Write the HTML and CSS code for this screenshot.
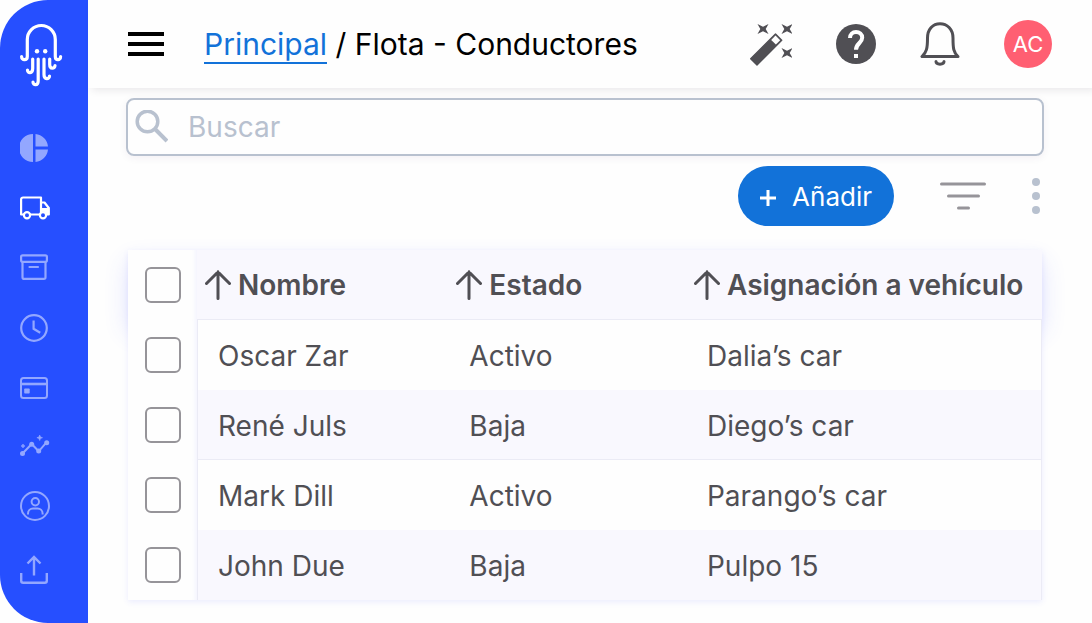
FILE: index.html
```html
<!DOCTYPE html>
<html lang="es">
<head>
    <meta charset="UTF-8">
    <meta name="viewport" content="width=device-width, initial-scale=1.0">
    <title>Flota - Conductores</title>
    <link rel="stylesheet" href="styles.css">
</head>
<body>
    <div class="app">
        <nav class="sidebar" aria-label="Principal">
            <a class="logo" href="#" aria-label="Inicio">
                <svg width="44" height="64" viewBox="0 0 44 64" fill="none" stroke="#fff" stroke-width="3.2" stroke-linecap="round" stroke-linejoin="round">
                    <path d="M1.600 33.500C1.600 38 7.300 37.500 7.300 33.500V16.500a14 14 0 0 1 28 0V33.500C35.300 37.500 40.600 38 40.600 33.500"/>
                    <path d="M12.700 36V45.500C12.700 51 7.500 50.500 7.500 47"/>
                    <path d="M18.200 36V58C18.200 63 13 62.500 13 59"/>
                    <path d="M24 36V51.500C24 57 29.500 56.500 29.500 53"/>
                    <path d="M29.700 36V41.500C29.700 46.500 35 46 35 42.500"/>
                    <circle cx="17" cy="28.200" r="2.200" fill="#fff" stroke="none"/>
                    <circle cx="25.200" cy="28.200" r="2.200" fill="#fff" stroke="none"/>
                </svg>
            </a>
            <div class="menu">
                <a class="menu-item" href="#" aria-label="Panel">
                    <svg width="28" height="28" viewBox="0 0 28 28" fill="currentColor">
                        <path d="M13 0v28A14 14 0 0 1 13 0zM15.500 0A14 14 0 0 1 28 12.600H15.500zM15.500 15.400H28A14 14 0 0 1 15.500 28z"/>
                    </svg>
                </a>
                <a class="menu-item active" href="#" aria-label="Flota">
                    <svg width="30" height="24" viewBox="0 0 30 24" fill="none" stroke="currentColor" stroke-width="2.200" stroke-linejoin="round">
                        <path d="M4 18.500H1.100V3.500a2 2 0 0 1 2-2H21V18.500H10"/>
                        <path d="M21 6.500h3.500l4.300 5.500v6.500h-2"/>
                        <path d="M21 12h7.800v6h-2.500a3.500 3.500 0 0 0-5.300-2z" fill="currentColor" stroke="none"/>
                        <circle cx="7" cy="19.300" r="3.100" fill="#264fff"/>
                        <circle cx="23" cy="19.300" r="3.100" fill="#264fff"/>
                    </svg>
                </a>
                <a class="menu-item" href="#" aria-label="Archivo">
                    <svg width="28" height="28" viewBox="0 0 28 28" fill="none" stroke="currentColor" stroke-width="2.200" stroke-linejoin="round" stroke-linecap="round">
                        <rect x="1.100" y="1.300" width="25.800" height="6.500" rx="1.500"/>
                        <path d="M2.500 8v15.200a1.700 1.700 0 0 0 1.700 1.700h19.600a1.700 1.700 0 0 0 1.700-1.700V8M9.500 13h8.500"/>
                    </svg>
                </a>
                <a class="menu-item" href="#" aria-label="Historial">
                    <svg width="28" height="28" viewBox="0 0 28 28" fill="none" stroke="currentColor" stroke-width="2.200">
                        <circle cx="14" cy="14" r="12.800"/>
                        <path d="M13.600 6.500v8.300l6.600 4"/>
                    </svg>
                </a>
                <a class="menu-item" href="#" aria-label="Pagos">
                    <svg width="28" height="22" viewBox="0 0 28 22" fill="none" stroke="currentColor" stroke-width="2">
                        <rect x="1" y="1" width="26" height="20" rx="2.500"/>
                        <path d="M1 7h26" stroke-width="2.600"/>
                        <rect x="4.200" y="11.500" width="5.500" height="5" rx=".8" fill="currentColor" stroke="none"/>
                    </svg>
                </a>
                <a class="menu-item" href="#" aria-label="Estadísticas">
                    <svg width="30" height="28" viewBox="0 0 30 28" fill="currentColor">
                        <path d="M2.500 19.500l9.200-9.500 7 7.300 8-9.200" fill="none" stroke="currentColor" stroke-width="2"/>
                        <circle cx="2.500" cy="19.500" r="2.500"/>
                        <circle cx="11.700" cy="10.300" r="2.500"/>
                        <circle cx="18.700" cy="17" r="2.500"/>
                        <circle cx="26.700" cy="8.700" r="2.500"/>
                        <path d="M19.700 1l.8 2 2 .7-2 .8-.8 2-.8-2-2-.8 2-.7zM3 10l.6 1.400 1.400.6-1.400.6L3 14l-.6-1.400L1 12l1.400-.6z" stroke="currentColor" stroke-width=".6"/>
                    </svg>
                </a>
                <a class="menu-item" href="#" aria-label="Perfil">
                    <svg width="30" height="34" viewBox="0 0 30 34" fill="none" stroke="currentColor" stroke-width="2">
                        <circle cx="15" cy="15" r="14"/>
                        <circle cx="15.300" cy="10.800" r="3.700"/>
                        <path d="M8 23.500v-1a5 5 0 0 1 5-5h4.600a5 5 0 0 1 5 5v1"/>
                    </svg>
                </a>
                <a class="menu-item" href="#" aria-label="Exportar">
                    <svg width="28" height="34" viewBox="0 0 28 34" fill="none" stroke="currentColor" stroke-width="2.400">
                        <path d="M1.200 22v7.800a2 2 0 0 0 2 2h21.600a2 2 0 0 0 2-2V22M14 24.500V6M7.500 12.500L14 6l6.500 6.500"/>
                    </svg>
                </a>
            </div>
        </nav>

        <div class="main">
            <header class="header">
                <button class="icon-btn" type="button" aria-label="Menú">
                    <svg width="36" height="24" viewBox="0 0 36 24"><path d="M0 0h36v4H0zM0 10h36v4H0zM0 20h36v4H0z"/></svg>
                </button>
                <h1 class="title"><a href="#">Principal</a> / Flota - Conductores</h1>
                <div class="actions">
                    <button class="icon-btn" type="button" aria-label="Asistente">
                        <svg width="42" height="44" viewBox="0 0 42 44" fill="#504f54">
                            <path d="M25.500 12l6.200 6.200L7 43 .7 36.700z" stroke="#504f54" stroke-width="1.400" stroke-linejoin="round"/>
                            <path d="M25.500 13.600l4.700 4.700-4.300 4.300-4.700-4.700z" fill="#fefefe"/>
                            <path d="M7.500 2l5.500 2.700L18.500 2 15.700 7l2.800 5-5.500-2.700L7.500 12l2.800-5zM31.500 2L37 4.700 42.500 2 39.700 7l2.800 5L37 9.300 31.500 12l2.800-5zM31.500 26l5.500 2.700 5.500-2.700-2.800 5 2.800 5-5.500-2.700-5.500 2.700 2.800-5z"/>
                        </svg>
                    </button>
                    <button class="icon-btn" type="button" aria-label="Ayuda">
                        <svg width="40" height="40" viewBox="0 0 40 40" fill="none">
                            <circle cx="20" cy="20" r="20" fill="#504f54"/>
                            <path d="M14 14c0-3.700 2.600-6 6-6s6.200 2.300 6.200 5.800c0 5-6.200 5.600-6.200 12" stroke="#fff" stroke-width="4"/>
                            <path d="M18 30h4v4h-4z" fill="#fff"/>
                        </svg>
                    </button>
                    <button class="icon-btn" type="button" aria-label="Notificaciones">
                        <svg width="40" height="44" viewBox="0 0 40 44" fill="none" stroke="#504f54" stroke-width="3" stroke-linejoin="round">
                            <path d="M2 34.500h36c-4.500-4-5-8-5-18.500C33 7 27 1.700 20 1.700S7.500 7 7.500 16c0 10.500-1 14.500-5.500 18.500z"/>
                            <path d="M16 39.500c0 3.500 8 3.500 8 0" stroke-linecap="round"/>
                        </svg>
                    </button>
                    <button class="avatar" type="button">AC</button>
                </div>
            </header>

            <main class="content">
                <label class="search">
                    <svg width="34" height="34" viewBox="0 0 34 34" fill="none" stroke="#b8c1cf" stroke-width="3.500">
                        <circle cx="13.500" cy="11.500" r="10.300"/>
                        <path d="M21 19l12 12" stroke-width="4"/>
                    </svg>
                    <input type="search" placeholder="Buscar" aria-label="Buscar">
                </label>

                <div class="toolbar">
                    <button class="add-btn" type="button">
                        <svg width="16" height="20" viewBox="0 0 16 20" fill="none" stroke="#fff" stroke-width="3"><path d="M8 4v16M0 12h16"/></svg>
                        Añadir
                    </button>
                    <button class="icon-btn" type="button" aria-label="Filtrar">
                        <svg width="46" height="32" viewBox="0 0 46 32" stroke="#969499" stroke-width="3" stroke-linecap="round"><path d="M1.500 4h43M8.500 16h30M18.500 28h10"/></svg>
                    </button>
                    <button class="icon-btn" type="button" aria-label="Más opciones">
                        <svg width="8" height="36" viewBox="0 0 8 36" fill="#b8c1cf"><circle cx="4" cy="4" r="4"/><circle cx="4" cy="18" r="4"/><circle cx="4" cy="32" r="4"/></svg>
                    </button>
                </div>

                <table class="drivers">
                    <colgroup>
                        <col class="col-check">
                        <col class="col-name">
                        <col class="col-status">
                        <col>
                    </colgroup>
                    <thead>
                        <tr>
                            <th class="check"><input type="checkbox" aria-label="Seleccionar todos"></th>
                            <th><button class="sort" type="button"><svg class="arrow" viewBox="0 0 26 30"><path d="M13 28.500V2M1.500 13.500L13 2l11.500 11.500"/></svg>Nombre</button></th>
                            <th><button class="sort" type="button"><svg class="arrow" viewBox="0 0 26 30"><path d="M13 28.500V2M1.500 13.500L13 2l11.500 11.500"/></svg>Estado</button></th>
                            <th><button class="sort" type="button"><svg class="arrow" viewBox="0 0 26 30"><path d="M13 28.500V2M1.500 13.500L13 2l11.500 11.500"/></svg>Asignación a vehículo</button></th>
                        </tr>
                    </thead>
                    <tbody>
                        <tr>
                            <td class="check"><input type="checkbox" aria-label="Seleccionar Oscar Zar"></td>
                            <td>Oscar Zar</td>
                            <td>Activo</td>
                            <td>Dalia’s car</td>
                        </tr>
                        <tr>
                            <td class="check"><input type="checkbox" aria-label="Seleccionar René Juls"></td>
                            <td>René Juls</td>
                            <td>Baja</td>
                            <td>Diego’s car</td>
                        </tr>
                        <tr>
                            <td class="check"><input type="checkbox" aria-label="Seleccionar Mark Dill"></td>
                            <td>Mark Dill</td>
                            <td>Activo</td>
                            <td>Parango’s car</td>
                        </tr>
                        <tr>
                            <td class="check"><input type="checkbox" aria-label="Seleccionar John Due"></td>
                            <td>John Due</td>
                            <td>Baja</td>
                            <td>Pulpo 15</td>
                        </tr>
                    </tbody>
                </table>
            </main>
        </div>
    </div>
</body>
</html>
```
FILE: styles.css
```css
* { box-sizing: border-box; }
body { margin: 0; font-family: Inter, "Liberation Sans", sans-serif; font-size: 28px; color: #504f54; background: #fefefe; }
button, input { font: inherit; color: inherit; }
svg { display: block; flex: none; }

.app { display: flex; min-height: 100vh; }

/* Sidebar */
.sidebar {
    width: 88px;
    flex: none;
    background: #264fff;
    border-radius: 48px 0 0 48px;
}

.logo { display: block; padding: 23px 0 0 20px; height: 118px; }

.menu-item {
    display: flex;
    align-items: center;
    height: 60px;
    padding-left: 20px;
    color: #93a7ff;
}

.menu-item.active { color: #fff; }

/* Header */
.main { flex: 1; min-width: 0; }

.header {
    display: flex;
    align-items: center;
    height: 88px;
    padding: 0 40px;
    box-shadow: 4px 2px 8px rgba(40, 30, 50, 0.1);
}

.title {
    margin: 0 0 0 40px;
    font-size: 30px;
    font-weight: 400;
    line-height: 36px;
    color: #000;
    white-space: nowrap;
}

.title a {
    color: #1272d9;
    text-decoration: none;
    border-bottom: 2px solid #1272d9;
}

.actions { display: flex; align-items: center; gap: 44px; margin-left: auto; }

.icon-btn { padding: 0; border: 0; background: none; cursor: pointer; }

.avatar {
    width: 48px;
    height: 48px;
    padding: 0;
    border: 0;
    border-radius: 50%;
    background: #ff5f72;
    color: #fff;
    font-size: 22px;
}

/* Content */
.content { padding: 10px 48px 20px 38px; }

.search {
    display: flex;
    align-items: center;
    gap: 20px;
    height: 58px;
    padding: 0 6px;
    border: 2px solid #b8c1cf;
    border-radius: 8px;
    box-shadow: 0 2px 8px rgba(60, 20, 80, 0.06);
}

.search input {
    flex: 1;
    min-width: 0;
    padding: 0;
    border: 0;
    outline: 0;
    background: none;
}

.search input::placeholder { color: #b8c1cf; }

.toolbar {
    display: flex;
    justify-content: flex-end;
    align-items: center;
    gap: 46px;
    padding: 10px 4px 24px 0;
}

.add-btn {
    display: flex;
    align-items: center;
    gap: 16px;
    height: 60px;
    padding: 0 22px;
    border: 0;
    border-radius: 30px;
    background: #1272d9;
    color: #fff;
    font-size: 26px;
    cursor: pointer;
}

/* Drivers table */
.drivers {
    width: calc(100% - 4px);
    margin: 0 2px;
    table-layout: fixed;
    border-collapse: separate;
    border-spacing: 0;
    box-shadow: 0 2px 6px rgba(70, 80, 255, 0.1);
}

.drivers thead tr { box-shadow: 0 12px 24px rgba(70, 80, 255, 0.16); }

.col-check { width: 69px; }
.col-name { width: 27.5%; }
.col-status { width: 26%; }

.drivers th, .drivers td { height: 70px; padding: 0; text-align: left; }
.drivers th { padding-left: 8px; background: #f9f8fe; border-bottom: 1px solid #ebebf5; }
.drivers td { padding: 2px 0 0 21px; background: #fefefe; }
.drivers tr:nth-child(even) td { background: #f9f8fe; }
.drivers tbody tr:nth-child(even):not(:last-child) td:not(.check) { border-bottom: 1px solid #ebebf5; }
.drivers td:nth-child(2) { padding-left: 20px; border-left: 1px solid #ebebf5; }
.drivers td:last-child { border-right: 1px solid #ebebf5; }

.drivers thead .check,
.drivers tbody tr:nth-child(n) .check {
    padding: 0 0 0 17px;
    background: #fefefe;
    border-bottom: 0;
    box-shadow: inset -6px 0 4px -4px rgba(70, 80, 255, 0.06);
}

.check input {
    display: block;
    width: 36px;
    height: 36px;
    margin: 0;
    appearance: none;
    border: 2px solid #969499;
    border-radius: 6px;
}

.check input:checked { background: #1272d9; }

.sort {
    display: flex;
    align-items: center;
    gap: 7px;
    padding: 0;
    border: 0;
    background: none;
    font-weight: 600;
    white-space: nowrap;
    cursor: pointer;
}

.arrow { width: 26px; height: 30px; fill: none; stroke: #504f54; stroke-width: 3; stroke-linecap: round; }
```
